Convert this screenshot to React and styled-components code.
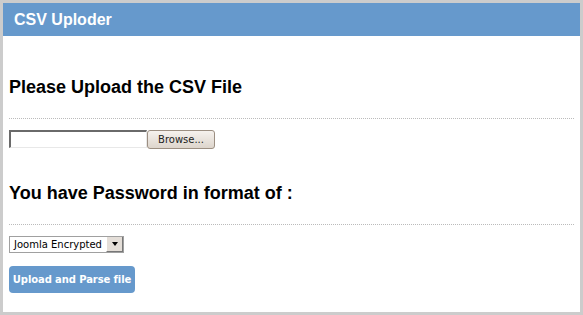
import styled, { createGlobalStyle } from 'styled-components';

const Global = createGlobalStyle`
  * { box-sizing: border-box; }
  body { margin: 0; background: #fff; font-family: "Liberation Sans", Arial, sans-serif; }
`;

const Panel = styled.div`
  width: 583px;
  height: 315px;
  border: 3px solid #cccccc;
  background: #fff;
  display: flex;
  flex-direction: column;
`;

const Header = styled.div`
  height: 33px;
  background: #6699cc;
  color: #fff;
  font-weight: bold;
  font-size: 16px;
  padding-left: 11px;
  display: flex;
  align-items: center;
`;

const Body = styled.div`
  padding: 0 6px;
  display: flex;
  flex-direction: column;
`;

const SectionTitle = styled.h2`
  margin: ${({ top }) => top}px 0 0;
  padding-bottom: 20px;
  border-bottom: 1px dotted #bbbbbb;
  font-size: 18px;
  font-weight: bold;
  color: #000;
  line-height: 21px;
`;

const FileRow = styled.div`
  margin-top: 11px;
  display: flex;
  align-items: flex-start;
  font-family: "DejaVu Sans", sans-serif;
`;

const FileField = styled.div`
  width: 138px;
  height: 18px;
  border-style: solid;
  border-width: 2px 1px 1px 2px;
  border-color: #6a6a6a #e8e8e8 #e8e8e8 #6a6a6a;
  background: #fff;
`;

const BrowseButton = styled.button`
  width: 68px;
  height: 19px;
  padding: 0;
  border: 1px solid #9c8f82;
  border-radius: 3px;
  background: linear-gradient(#f6f2ee, #ddd5cc);
  font-family: "DejaVu Sans", sans-serif;
  font-size: 10px;
  color: #222;
  line-height: 16px;
`;

const SelectBox = styled.div`
  margin-top: 11px;
  width: 115px;
  height: 17px;
  border: 1px solid #a0a0a0;
  display: flex;
  align-items: stretch;
  font-family: "DejaVu Sans", sans-serif;
  font-size: 10px;
  color: #000;
`;

const SelectText = styled.span`
  flex: 1;
  padding-left: 4px;
  line-height: 15px;
  white-space: nowrap;
`;

const SelectArrow = styled.span`
  width: 17px;
  background: #e4ded8;
  border-left: 1px solid #fff;
  border-right: 1px solid #777;
  border-bottom: 1px solid #777;
  display: flex;
  align-items: center;
  justify-content: center;
  &::after {
    content: '';
    border-left: 3.5px solid transparent;
    border-right: 3.5px solid transparent;
    border-top: 4px solid #000;
  }
`;

const SubmitButton = styled.button`
  margin-top: 13px;
  align-self: flex-start;
  width: 126px;
  height: 27px;
  padding: 0;
  border: none;
  border-radius: 4px;
  background: #6699cc;
  color: #fff;
  font-family: "DejaVu Sans", sans-serif;
  font-weight: bold;
  font-size: 10px;
  letter-spacing: -0.1px;
  white-space: nowrap;
`;

export default function App() {
  return (
    <>
      <Global />
      <Panel>
        <Header>CSV Uploder</Header>
        <Body>
          <SectionTitle top={41}>Please Upload the CSV File</SectionTitle>
          <FileRow>
            <FileField />
            <BrowseButton>Browse...</BrowseButton>
          </FileRow>
          <SectionTitle top={34}>You have Password in format of :</SectionTitle>
          <SelectBox>
            <SelectText>Joomla Encrypted</SelectText>
            <SelectArrow />
          </SelectBox>
          <SubmitButton>Upload and Parse file</SubmitButton>
        </Body>
      </Panel>
    </>
  );
}
